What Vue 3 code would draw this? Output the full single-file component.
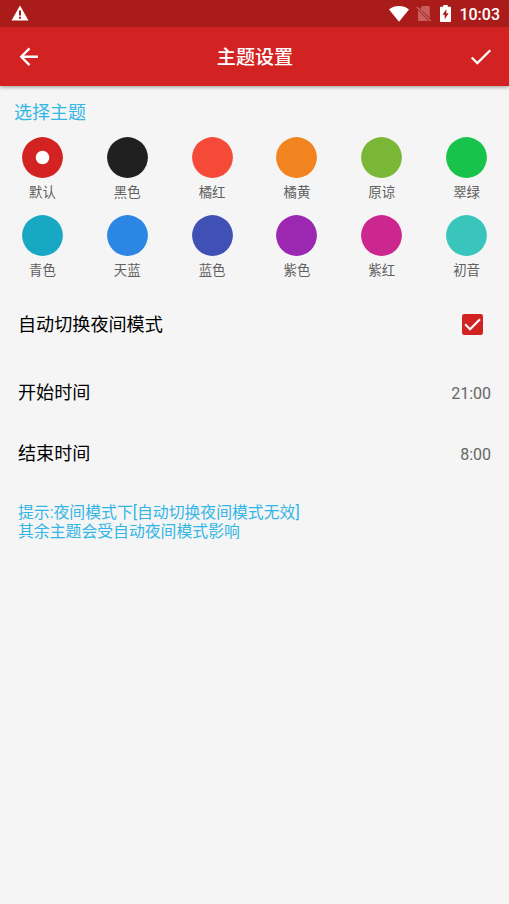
<script setup>
import { ref } from 'vue'

const themes = [
  { name: '默认', color: '#d22222' },
  { name: '黑色', color: '#202020' },
  { name: '橘红', color: '#f54a38' },
  { name: '橘黄', color: '#f28420' },
  { name: '原谅', color: '#7bb737' },
  { name: '翠绿', color: '#18c34c' },
  { name: '青色', color: '#18a8c4' },
  { name: '天蓝', color: '#2c86e4' },
  { name: '蓝色', color: '#3f51b5' },
  { name: '紫色', color: '#9c27b0' },
  { name: '紫红', color: '#cc268f' },
  { name: '初音', color: '#3ac5bc' },
]
const selected = ref(0)
const autoNight = ref(true)
</script>

<template>
  <div class="screen">
    <div class="status">
      <svg class="warn" viewBox="0 0 18 16"><path fill="#fff" d="M9 .5 17.500 15.500H.5z" /><path fill="#aa1c1a" d="M8 5.500h2v5H8zM8 11.700h2v2H8z" /></svg>
      <div class="tray">
        <svg class="wifi" viewBox="0 0 20 16"><path fill="#fff" d="M10 15.700 0 3.400C2.800 1.200 6.200 0 10 0s7.200 1.200 10 3.400z" /></svg>
        <svg class="sim" viewBox="0 0 16 17"><path fill="#c65f5e" d="M6.500 1h6c.8 0 1.300.5 1.300 1.300v10.700L4 3.400zM2 5.200l10.800 10.700H3.300c-.8 0-1.300-.5-1.300-1.300z" /><path stroke="#c65f5e" stroke-width="1.500" d="m.7 2 14 14" /></svg>
        <svg class="battery" viewBox="0 0 11 17"><path fill="#fff" d="M3.300 0h4.400v1.700H10c.6 0 1 .4 1 1V16c0 .6-.4 1-1 1H1c-.6 0-1-.4-1-1V2.700c0-.6.4-1 1-1h2.300z" /><path fill="#aa1c1a" d="M6.300 4.200v4h2.300l-3.900 6v-4.400H2.500z" /></svg>
        <span class="clock">10:03</span>
      </div>
    </div>
    <header class="toolbar">
      <svg class="icon" viewBox="0 0 24 24"><path fill="#fff" d="M20 11H7.830l5.590-5.590L12 4l-8 8 8 8 1.410-1.410L7.830 13H20v-2z" /></svg>
      <h1>主题设置</h1>
      <svg class="icon" viewBox="0 0 24 24"><path fill="#fff" d="M9 16.170 4.830 12l-1.420 1.410L9 19 21 7l-1.410-1.410z" /></svg>
    </header>
    <main>
      <h2>选择主题</h2>
      <div class="themes">
        <div v-for="(t, i) in themes" :key="t.name" class="theme" @click="selected = i">
          <svg class="swatch" viewBox="0 0 41 41"><circle cx="20.500" cy="20.500" r="20.400" :fill="t.color" /><circle v-if="selected === i" cx="20.500" cy="20.500" r="6.800" fill="#fff" /></svg>
          <span>{{ t.name }}</span>
        </div>
      </div>
      <div class="row auto" @click="autoNight = !autoNight">
        <span class="label">自动切换夜间模式</span>
        <svg class="check" viewBox="0 0 21 21"><rect width="21" height="21" rx="2.300" fill="#d22222" /><path v-if="autoNight" fill="none" stroke="#fff" stroke-width="2.100" d="m3.100 10.300 5 5L18 5.200" /></svg>
      </div>
      <div class="row start"><span class="label">开始时间</span><span class="time">21:00</span></div>
      <div class="row end"><span class="label">结束时间</span><span class="time">8:00</span></div>
      <p>提示:夜间模式下[自动切换夜间模式无效]<br />其余主题会受自动夜间模式影响</p>
    </main>
  </div>
</template>

<style>
body { background: #f5f5f5; }
</style>

<style scoped>
.screen { height: 904px; overflow: hidden; background: #f5f5f5; font-family: Roboto, "Noto Sans CJK SC", sans-serif; color: #000; }
svg { display: block; flex: none; }
.status { position: relative; z-index: 1; height: 27px; background: #aa1c1a; display: flex; justify-content: space-between; padding: 0 9px 0 11px; }
.warn { width: 18px; height: 16px; margin-top: 5px; }
.tray { display: flex; align-items: flex-start; }
.wifi { width: 20px; height: 16px; margin: 5.500px 7px 0 0; }
.sim { width: 16px; height: 17px; margin: 5px 8px 0 0; }
.battery { width: 11px; height: 17px; margin: 5px 8px 0 0; }
.clock { color: #fff; font-size: 16px; font-weight: 500; line-height: 30px; }
.toolbar { height: 59px; background: #d22222; display: flex; align-items: center; justify-content: space-between; padding: 0 14.500px; box-sizing: border-box; box-shadow: 0 1px 4px rgba(0, 0, 0, .4); }
.icon { width: 27.500px; height: 27.500px; }
h1 { margin: 0; color: #fff; font-size: 19.100px; line-height: 28px; font-weight: 500; padding: 2px 0 0 1px; }
h2 { margin: 0; padding: 13px 14px 0; font-size: 18px; line-height: 28px; font-weight: 400; color: #33b5e5; }
.themes { display: grid; grid-template-columns: repeat(6, 1fr); grid-auto-rows: 77.500px; padding-top: 10px; }
.theme { display: flex; flex-direction: column; align-items: center; font-size: 13.400px; line-height: 20px; color: #606060; }
.swatch { width: 41px; height: 41px; margin-bottom: 5px; }
.row { display: flex; align-items: center; justify-content: space-between; padding: 0 18px; font-size: 18px; height: 61px; }
.auto { padding-right: 26px; height: 65px; }
.start { margin-top: 5px; }
.label { padding-bottom: 4px; font-size: 18.100px; }
.check { width: 21px; height: 21px; }
.time { font-size: 16px; color: #666; padding-top: 1px; }
p { margin: 19px 18px 0; font-size: 15.850px; line-height: 19px; color: #33b5e5; white-space: nowrap; }
</style>
